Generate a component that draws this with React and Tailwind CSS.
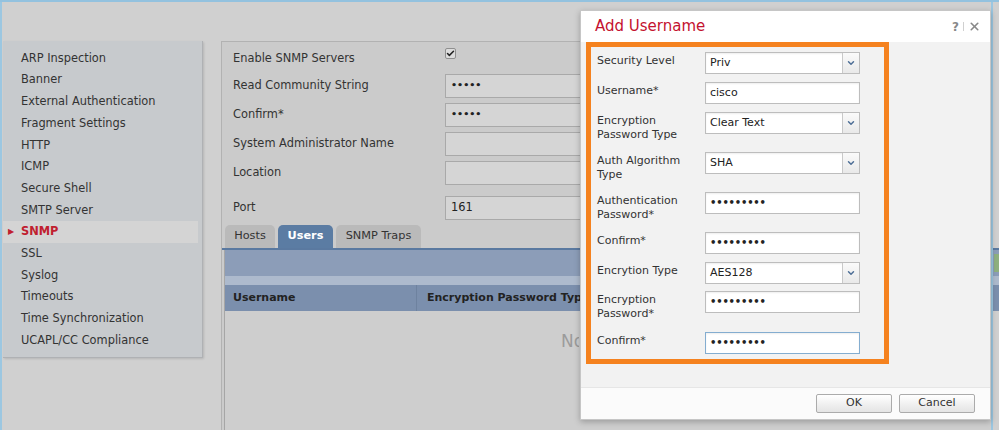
import { Check, ChevronDown, X } from "lucide-react";

const sideItems = [
  "ARP Inspection",
  "Banner",
  "External Authentication",
  "Fragment Settings",
  "HTTP",
  "ICMP",
  "Secure Shell",
  "SMTP Server",
  "SNMP",
  "SSL",
  "Syslog",
  "Timeouts",
  "Time Synchronization",
  "UCAPL/CC Compliance",
];

const Sidebar = () => (
  <div className="ml-[1px] mt-[39px] w-[200px] h-[317px] bg-[#c7cacd] border-r border-b border-[#afb1b4] shadow-[1px_1px_2px_rgba(0,0,0,0.12)] pt-[6.5px]">
    {sideItems.map((item) =>
      item === "SNMP" ? (
        <div
          key={item}
          className="h-[21.7px] mr-[4px] flex items-center bg-[#d4d4d4] text-[#c0202f] font-bold text-[11.4px]"
        >
          <span className="w-[18px] pl-[5px] text-[8px] leading-none">▶</span>
          {item}
        </div>
      ) : (
        <div key={item} className="h-[21.7px] flex items-center pl-[18px] text-[11.4px] text-[#333]">
          {item}
        </div>
      )
    )}
  </div>
);

const FormRow = ({ label, children, className = "h-[29px]" }) => (
  <div className={`flex items-center ${className}`}>
    <div className="w-[212px] text-[11.4px] text-[#333]">{label}</div>
    {children}
  </div>
);

const PageInput = ({ children }) => (
  <div className="w-[400px] h-[24px] border border-[#a9a9a9] bg-[#d5d5d5] flex items-center pl-[5px] text-[11.4px] text-[#222]">
    {children}
  </div>
);

const MainPanel = () => (
  <div className="flex-1 mt-[39px] ml-[18px] border-l border-t border-[#b2b2b2] bg-[#cbcbcb] flex flex-col">
    <div className="pt-[1px] pl-[11px]">
      <FormRow label="Enable SNMP Servers" className="h-[28px] items-start pt-[7px]">
        <div className="w-[11px] h-[11px] -mt-[2px] rounded-[2px] border border-[#8f8f8f] bg-[#dcdcdc] flex items-center justify-center">
          <Check size={9} strokeWidth={4} className="text-[#222]" />
        </div>
      </FormRow>
      <FormRow label="Read Community String">
        <PageInput>
          <span className="text-[9.5px] font-bold">•••••</span>
        </PageInput>
      </FormRow>
      <FormRow label="Confirm*">
        <PageInput>
          <span className="text-[9.5px] font-bold">•••••</span>
        </PageInput>
      </FormRow>
      <FormRow label="System Administrator Name">
        <PageInput />
      </FormRow>
      <FormRow label="Location">
        <PageInput />
      </FormRow>
      <FormRow label="Port" className="h-[29px] mt-[6px]">
        <PageInput>161</PageInput>
      </FormRow>
    </div>

    <div className="mt-[3px] pl-[3px] flex items-end gap-[3px] h-[23px] text-[11.3px]">
      <div className="w-[50px] h-full rounded-t-[5px] bg-[#bababa] text-[#333] flex items-center justify-center">
        Hosts
      </div>
      <div className="w-[55px] h-full rounded-t-[5px] bg-[#5b7ca3] text-white font-bold flex items-center justify-center">
        Users
      </div>
      <div className="w-[85px] h-full rounded-t-[5px] bg-[#bababa] text-[#333] flex items-center justify-center">
        SNMP Traps
      </div>
    </div>
    <div className="h-[2px] bg-[#5a79a0]" />
    <div className="flex-1 ml-[2px] border-l border-[#a6a6a6] flex flex-col">
      <div className="h-[26px] bg-[#8c9db8]" />
      <div className="h-[9px] bg-[#adbacd]" />
      <div className="h-[26px] bg-[#7b8fad] flex items-center text-[11px] font-bold text-[#222]">
        <div className="w-[192px] h-full flex items-center pl-[8px] border-r border-[#6e829f]">Username</div>
        <div className="pl-[10px] whitespace-nowrap">Encryption Password Type</div>
      </div>
      <div className="flex-1 bg-[#cecece] pl-[336px] pt-[20px]">
        <div className="w-[18px] overflow-hidden text-[17px] leading-[20px] text-[#9b9b9b] whitespace-nowrap">
          No data
        </div>
      </div>
    </div>
  </div>
);

const Field = ({ children, select, focus }) => (
  <div
    className={`w-[155px] h-[22px] bg-white flex items-center border shadow-[inset_0_1px_2px_rgba(0,0,0,0.07)] text-[11px] text-[#222] ${
      focus ? "border-[#84add0]" : "border-[#bdbdbd]"
    }`}
  >
    <div className="flex-1 pl-[4px]">{children}</div>
    {select && (
      <div className="w-[17px] h-full border-l border-[#c9c9c9] bg-gradient-to-b from-[#fafafa] to-[#e9e9e9] flex items-center justify-center">
        <ChevronDown size={10} strokeWidth={3.5} className="text-[#4d6e96]" />
      </div>
    )}
  </div>
);

const Dots = () => <span className="text-[10px] font-bold tracking-[-0.2px]">•••••••••</span>;

const DRow = ({ label, h, children }) => (
  <div className={`flex ${h}`}>
    <div className="w-[108px] pt-[2px] leading-[14px] text-[11px] text-[#333]">{label}</div>
    <div>{children}</div>
  </div>
);

const Dialog = () => (
  <div className="absolute left-[580px] top-[8px] w-[411px] h-[410px] bg-white border border-[#c6c6c6] shadow-[0_2px_6px_rgba(0,0,0,0.25)] flex flex-col">
    <div className="h-[31px] flex items-center justify-between pl-[14px] pr-[9px]">
      <div className="text-[15px] text-[#c4122f]">Add Username</div>
      <div className="flex items-center gap-[4px] text-[#888]">
        <span className="text-[12px] font-bold">?</span>
        <span className="w-px h-[9px] bg-[#d0d0d0]" />
        <X size={13} strokeWidth={3} />
      </div>
    </div>
    <div className="h-[345px] bg-[#f2f2f2] pl-[5px]">
      <div className="w-[303px] h-[322px] border-[5px] border-[#f5821f] pt-[5px] pl-[6px] flex flex-col">
        <DRow label="Security Level" h="h-[30px]">
          <Field select>Priv</Field>
        </DRow>
        <DRow label="Username*" h="h-[30px]">
          <Field>cisco</Field>
        </DRow>
        <DRow
          label={
            <>
              Encryption
              <br />
              Password Type
            </>
          }
          h="h-[40px]"
        >
          <Field select>Clear Text</Field>
        </DRow>
        <DRow
          label={
            <>
              Auth Algorithm
              <br />
              Type
            </>
          }
          h="h-[40px]"
        >
          <Field select>SHA</Field>
        </DRow>
        <DRow
          label={
            <>
              Authentication
              <br />
              Password*
            </>
          }
          h="h-[40px]"
        >
          <Field>
            <Dots />
          </Field>
        </DRow>
        <DRow label="Confirm*" h="h-[30px]">
          <Field>
            <Dots />
          </Field>
        </DRow>
        <DRow label="Encrytion Type" h="h-[29px]">
          <Field select>AES128</Field>
        </DRow>
        <DRow
          label={
            <>
              Encryption
              <br />
              Password*
            </>
          }
          h="h-[41px]"
        >
          <Field>
            <Dots />
          </Field>
        </DRow>
        <DRow label="Confirm*" h="h-[22px]">
          <Field focus>
            <Dots />
          </Field>
        </DRow>
      </div>
    </div>
    <div className="flex-1 bg-[#fbfbfb] border-t border-[#e6e6e6] flex items-start justify-end gap-[7px] pr-[15px] pt-[6px]">
      <button className="w-[76px] h-[19px] rounded-[2px] border border-[#ababab] bg-gradient-to-b from-white to-[#e4e4e4] text-[11px] text-[#333]">
        OK
      </button>
      <button className="w-[76px] h-[19px] rounded-[2px] border border-[#ababab] bg-gradient-to-b from-white to-[#e4e4e4] text-[11px] text-[#333]">
        Cancel
      </button>
    </div>
  </div>
);

export default function App() {
  return (
    <div className="relative w-[999px] h-[430px] overflow-hidden bg-[#d0d0d0] font-['DejaVu_Sans',sans-serif] border-t-2 border-[#93c2df] flex">
      <div className="w-[993px] h-full border-l-2 border-r-2 border-[#9cc7e1] flex">
        <Sidebar />
        <MainPanel />
      </div>
      <div className="flex-1 flex flex-col">
        <div className="h-[246px]" />
        <div className="h-[2px] bg-[#5a79a0]" />
        <div className="h-[26px] bg-[#8c9db8] flex items-center pl-[1px]">
          <div className="w-[5px] h-[18px] bg-[#8fb07f]" />
        </div>
        <div className="h-[9px] bg-[#adbacd]" />
        <div className="h-[26px] bg-[#7b8fad]" />
      </div>
      <Dialog />
    </div>
  );
}
